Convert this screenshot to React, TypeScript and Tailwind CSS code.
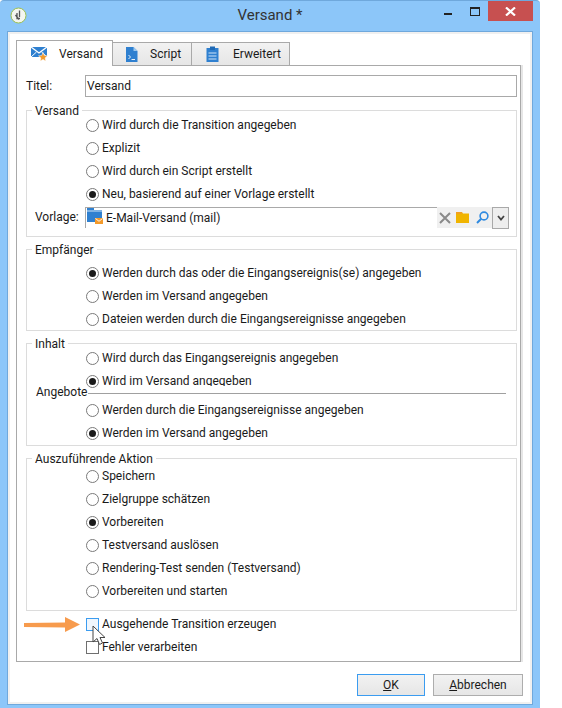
const ui = { fontFamily: 'Roboto, "Noto Sans", sans-serif' };

function Radio({ checked, label }: { checked?: boolean; label: string }) {
  return (
    <div className="flex h-[23px] items-center pl-[59px]">
      <span className="mr-[3px] flex h-[13px] w-[13px] items-center justify-center rounded-full border border-[#7a7a7a] bg-white">
        {checked && <span className="h-[7px] w-[7px] rounded-full bg-[#1a1a1a]" />}
      </span>
      <span className="-mt-px">{label}</span>
    </div>
  );
}

function Group({ title, className, children }: { title: string; className: string; children: React.ReactNode }) {
  return (
    <div className={`relative border border-[#dcdcdc] ${className}`}>
      <span className="absolute -top-[8px] left-[5px] bg-white px-[3px] leading-4">{title}</span>
      {children}
    </div>
  );
}

function CloseIcon() {
  return (
    <svg width="11" height="9" viewBox="0 0 11 9">
      <path d="M1 0.5 L10 8.5 M10 0.5 L1 8.5" stroke="#fff" strokeWidth="2.2" />
    </svg>
  );
}

function AppIcon() {
  return (
    <svg width="17" height="17" viewBox="0 0 17 17" className="ml-[10px] -mt-[1px]">
      <circle cx="8.5" cy="8.5" r="7.5" fill="#f4f6f0" stroke="#9cc04f" strokeWidth="1" />
      <path d="M9.5 3.5 V10 M7 6 V11.5 H10 M5.5 8 L9 12.5" stroke="#555" strokeWidth="1.3" fill="none" />
    </svg>
  );
}

function MailStarIcon() {
  return (
    <svg width="17" height="15" viewBox="0 0 17 15">
      <path d="M0 1 H16 V11 H0 Z" fill="#2f80d0" />
      <path d="M0 1 L8 7 L16 1" stroke="#fff" strokeWidth="1.3" fill="none" />
      <path d="M0 11 L5.5 6 M16 11 L10.5 6" stroke="#fff" strokeWidth="1" />
      <path d="M12 6.5 L13.3 9.5 L16.5 9.8 L14.1 11.9 L14.8 15 L12 13.4 L9.2 15 L9.9 11.9 L7.5 9.8 L10.7 9.5 Z" fill="#f39a2b" stroke="#fff" strokeWidth="0.5" />
    </svg>
  );
}

function ScriptIcon() {
  return (
    <svg width="12" height="15" viewBox="0 0 12 15">
      <path d="M0 0 H7.5 L11.5 4 V15 H0 Z" fill="#2f80d0" />
      <path d="M7.5 0 V4 H11.5 Z" fill="#9cc8ef" />
      <path d="M2.5 8 L4.5 10 L2.5 12 M5.5 12.5 H9" stroke="#fff" strokeWidth="0.9" fill="none" />
    </svg>
  );
}

function ClipboardIcon() {
  return (
    <svg width="13" height="16" viewBox="0 0 13 16">
      <path d="M0.5 2 H12.5 V16 H0.5 Z" fill="#2f80d0" />
      <path d="M4 0.5 H9 V4 H4 Z" fill="#1f69b5" />
      <path d="M2.5 7 H10.5 M2.5 10 H10.5 M2.5 13 H10.5" stroke="#cfe4f7" strokeWidth="1.2" />
    </svg>
  );
}

function TemplateIcon() {
  return (
    <svg width="16" height="16" viewBox="0 0 16 16" className="mb-[4px]">
      <path d="M0 0 H7 V2 H15 V14 H0 Z" fill="#2f80d0" />
      <path d="M0 3 H15" stroke="#cfe4f7" strokeWidth="1" />
      <path d="M8 10 H16 V16 H8 Z" fill="#f39a2b" />
      <path d="M8.5 10.5 L12 13.3 L15.5 10.5" stroke="#fff" strokeWidth="0.9" fill="none" />
    </svg>
  );
}

function TabButton({ icon, label, iconWidth, active, className }: { icon: React.ReactNode; label: string; iconWidth: string; active?: boolean; className: string }) {
  return (
    <div
      className={`flex items-center border border-[#a9a9a9] ${
        active ? "z-10 -mb-px h-[26px] border-b-0 bg-white" : "mt-[2px] h-[23px] -ml-px border-b-0 bg-linear-to-b from-[#f2f2f2] to-[#e6e6e6]"
      } ${className}`}
    >
      <span className={`flex justify-center ${iconWidth}`}>{icon}</span>
      <span>{label}</span>
    </div>
  );
}

export default function App() {
  return (
    <div className="h-[708px] w-[562px] overflow-hidden bg-white text-[12px] text-[#1a1a1a]" style={ui}>
      <div className="flex h-[708px] w-[540px] flex-col rounded-t-[4px] border-t border-[#6fa8dc] bg-[#8cc6f9]">
        <div className="relative flex h-[30px] items-center">
          <AppIcon />
          <div className="absolute inset-x-0 top-[4px] text-center text-[15px] leading-5 text-[#333]">Versand *</div>
          <div className="ml-auto mr-[7px] flex h-[20px] self-start">
            <span className="mr-[18px] mt-[12px] h-[2px] w-[8px] bg-[#222]" />
            <span className="mr-[8px] mt-[6px] h-[9px] w-[10px] border border-t-2 border-[#222]" />
            <span className="flex h-[20px] w-[45px] items-center justify-center bg-[#c75050]">
              <CloseIcon />
            </span>
          </div>
        </div>

        <div className="mx-[7px] h-[674px] border border-[#6fa8dc] bg-[#f0f0f0] p-[2px]">
          <div className="h-full bg-white pl-[6px] pr-[9px] pt-[6px]">
            <div className="flex h-[25px]">
              <TabButton active icon={<MailStarIcon />} label="Versand" iconWidth="w-[42px] pl-[2px]" className="w-[97px]" />
              <TabButton icon={<ScriptIcon />} label="Script" iconWidth="w-[37px]" className="w-[80px]" />
              <TabButton icon={<ClipboardIcon />} label="Erweitert" iconWidth="w-[41px]" className="w-[99px]" />
            </div>

            <div className="h-[597px] border border-[#a9a9a9] pl-[9px] pr-[3px] pt-[9px] shadow-[2px_0_0_#e6e6e6]">
              <div className="flex h-[22px] items-center">
                <span className="-mt-px w-[59px]">Titel:</span>
                <div className="flex h-[22px] flex-1 items-center border border-[#a9a9a9] px-[1px] pb-px">Versand</div>
              </div>

              <Group title="Versand" className="mt-[13px] h-[127px] pt-[3px]">
                <Radio label="Wird durch die Transition angegeben" />
                <Radio label="Explizit" />
                <Radio label="Wird durch ein Script erstellt" />
                <Radio checked label="Neu, basierend auf einer Vorlage erstellt" />
                <div className="mt-px flex h-[21px] items-center pl-[8px]">
                  <span className="-mt-px w-[50px]">Vorlage:</span>
                  <div className="flex h-[21px] w-[352px] items-center gap-[3px] border-l border-t border-[#a9a9a9] pl-[1px]">
                    <TemplateIcon />
                    <span className="-mt-px">E-Mail-Versand (mail)</span>
                  </div>
                  <div className="flex h-[21px] w-[55px] items-center bg-[#f0f0f0] pl-[1px]">
                    <svg width="12" height="12" viewBox="0 0 12 12" className="ml-[1px]">
                      <path d="M1 1 L11 11 M11 1 L1 11" stroke="#8a8a8a" strokeWidth="2" />
                    </svg>
                    <svg width="13" height="11" viewBox="0 0 13 11" className="ml-[5px]">
                      <path d="M0 0 H6 L7 1.5 H13 V11 H0 Z" fill="#f0b400" />
                      <path d="M0 1 H6" stroke="#f39a2b" strokeWidth="1.5" />
                    </svg>
                    <svg width="13" height="13" viewBox="0 0 13 13" className="ml-[7px]">
                      <circle cx="8" cy="5" r="3.9" fill="none" stroke="#2f8ae0" strokeWidth="1.6" />
                      <path d="M5.2 7.8 L1 12" stroke="#2f8ae0" strokeWidth="2" />
                    </svg>
                  </div>
                  <div className="flex h-[22px] w-[17px] items-center justify-center border border-[#a9a9a9] bg-[#eeeeee]">
                    <svg width="8" height="6" viewBox="0 0 8 6">
                      <path d="M1 1 L4 4.5 L7 1" stroke="#444" strokeWidth="1.8" fill="none" />
                    </svg>
                  </div>
                </div>
              </Group>

              <Group title="Empfänger" className="mt-[12px] h-[82px] pt-[12px]">
                <Radio checked label="Werden durch das oder die Eingangsereignis(se) angegeben" />
                <Radio label="Werden im Versand angegeben" />
                <Radio label="Dateien werden durch die Eingangsereignisse angegeben" />
              </Group>

              <Group title="Inhalt" className="mt-[12px] h-[103px] pt-[3px]">
                <Radio label="Wird durch das Eingangsereignis angegeben" />
                <Radio checked label="Wird im Versand angegeben" />
                <div className="relative h-[6px]">
                  <div className="absolute -top-[7px] left-[75px] h-[3px] w-[200px] bg-white" />
                  <div className="ml-[9px] flex h-0 items-center">
                    <span className="-mt-[2px] leading-4">Angebote</span>
                    <span className="ml-[1px] mr-[10px] h-px flex-1 bg-[#a0a0a0]" />
                  </div>
                </div>
                <Radio label="Werden durch die Eingangsereignisse angegeben" />
                <Radio checked label="Werden im Versand angegeben" />
              </Group>

              <Group title="Auszuführende Aktion" className="mt-[12px] h-[153px] pt-[6px]">
                <Radio label="Speichern" />
                <Radio label="Zielgruppe schätzen" />
                <Radio checked label="Vorbereiten" />
                <Radio label="Testversand auslösen" />
                <Radio label="Rendering-Test senden (Testversand)" />
                <Radio label="Vorbereiten und starten" />
              </Group>

              <div className="relative mt-[1px]">
                <div className="flex h-[24px] items-center pl-[60px]">
                  <span className="mr-[3px] h-[13px] w-[13px] border border-[#3b9cf0] bg-[#f0f6fd]" />
                  <span className="-mt-px">Ausgehende Transition erzeugen</span>
                </div>
                <div className="flex h-[23px] items-center pl-[60px]">
                  <span className="mr-[3px] h-[13px] w-[13px] border border-[#6f6f6f] bg-white" />
                  <span className="-mt-px">Fehler verarbeiten</span>
                </div>
                <svg width="56" height="15" viewBox="0 0 56 15" className="absolute -left-[2px] top-[5px]">
                  <path d="M0 6 L41 5.5 V0 L56 7.5 L41 15 V10.5 L0 10 Z" fill="#f79b4d" />
                </svg>
                <svg width="14" height="22" viewBox="0 0 14 22" className="absolute left-[66px] top-[13px]">
                  <path d="M1 1 V17 L5 13.5 L7.5 19.5 L10.5 18 L8 12.5 H13 Z" fill="#fff" stroke="#444" strokeWidth="1" />
                </svg>
              </div>
            </div>

            <div className="mt-[12px] flex justify-end gap-[8px]">
              <button className="h-[22px] w-[68px] border border-[#3b9cf0] bg-linear-to-b from-[#f2f2f2] to-[#e6e6e6] text-[12px]"><u>O</u>K</button>
              <button className="-mr-[2px] h-[22px] w-[90px] border border-[#adadad] bg-linear-to-b from-[#f2f2f2] to-[#e6e6e6] text-[12px]"><u>A</u>bbrechen</button>
            </div>
          </div>
        </div>
      </div>
    </div>
  );
}
